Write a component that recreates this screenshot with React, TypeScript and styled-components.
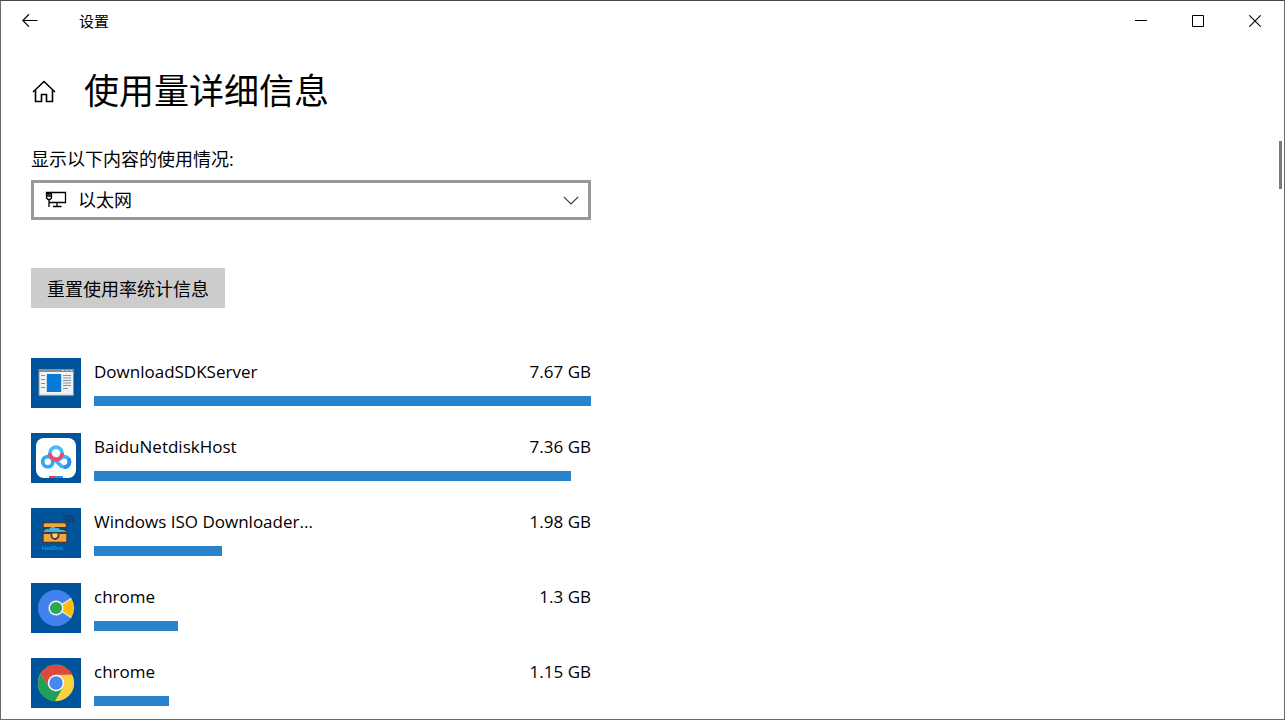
import React from "react";
import styled, { createGlobalStyle } from "styled-components";

const GlobalStyle = createGlobalStyle`
  *, *::before, *::after { box-sizing: border-box; }
  body {
    margin: 0;
    background: #fff;
    color: #000;
    font-family: "Open Sans", "Noto Sans CJK SC", sans-serif;
    font-size: 17px;
    line-height: 24px;
  }
  button, select { font: inherit; color: inherit; border-radius: 0; }
`;

const Window = styled.div`
  display: flex;
  flex-direction: column;
  min-height: 100vh;
  border: 1px solid #6b6869;
  border-top-color: #464445;
  background: #fff;
`;

const TitleBar = styled.header`
  display: flex;
  align-items: center;
  height: 40px;
  padding-right: 1px;
`;

const BackButton = styled.button`
  display: grid;
  place-items: center;
  width: 58px;
  height: 40px;
  padding: 0;
  border: 0;
  background: transparent;
`;

const AppName = styled.span`
  flex: 1;
  padding-left: 20px;
  font-size: 15px;
  line-height: 20px;
`;

const CaptionButton = styled.button`
  display: grid;
  place-items: center;
  width: 57px;
  height: 40px;
  padding: 0;
  border: 0;
  background: transparent;
`;

const PageHeader = styled.div`
  display: flex;
  align-items: center;
  gap: 27px;
  height: 100px;
  padding-left: 30px;
`;

const HomeLink = styled.a`
  display: grid;
  place-items: center;
  width: 26px;
  height: 26px;
  color: #000;
`;

const PageTitle = styled.h1`
  margin: 0;
  font-size: 35px;
  font-weight: 400;
  line-height: 48px;
`;

const Body = styled.div`
  display: flex;
  flex: 1;
`;

const Content = styled.main`
  flex: 1;
  padding: 6px 30px 10px;
`;

const ScrollRail = styled.div`
  width: 5px;
`;

const ScrollThumb = styled.div`
  width: 3px;
  height: 48px;
  background: #7a7a7a;
`;

const Column = styled.div`
  display: flex;
  flex-direction: column;
  align-items: flex-start;
  max-width: 560px;
`;

const FieldLabel = styled.label`
  margin-bottom: 9px;
  font-size: 18px;
`;

const SelectBox = styled.div`
  display: grid;
  align-items: center;
  width: 100%;
  margin-bottom: 48px;

  > * { grid-area: 1 / 1; }
  > svg { pointer-events: none; }
`;

const Select = styled.select`
  appearance: none;
  width: 100%;
  height: 40px;
  padding: 0 40px 0 44px;
  border: 3px solid #999;
  background: #fff;
  font-size: 18px;
`;

const NetworkGlyph = styled.svg`
  margin-left: 14px;
`;

const ChevronGlyph = styled.svg`
  justify-self: end;
  margin-right: 12px;
`;

const ResetButton = styled.button`
  height: 40px;
  margin-bottom: 50px;
  padding: 2px 16px 0;
  border: 0;
  background: #ccc;
  font-size: 18px;
`;

const UsageList = styled.ul`
  display: flex;
  flex-direction: column;
  gap: 25px;
  width: 100%;
  margin: 0;
  padding: 0;
  list-style: none;
`;

const UsageRow = styled.li`
  display: flex;
  gap: 13px;
`;

const Tile = styled.svg`
  flex: none;
  width: 50px;
  height: 50px;
  background: #00549c;
`;

const UsageInfo = styled.div`
  flex: 1;
  padding-top: 2px;
`;

const UsageText = styled.div`
  display: flex;
  justify-content: space-between;
  margin-bottom: 12px;
`;

const Bar = styled.div`
  height: 10px;
  background: #2882cc;
`;

const SdkIcon = () => (
  <Tile viewBox="0 0 50 50" aria-hidden="true">
    <rect x="7.5" y="11" width="35.5" height="27" fill="#8b8f91" />
    <rect x="8.5" y="14" width="33.5" height="22.8" fill="#f1f2f2" />
    <path d="M31 12.5h2M35 12.5h2M39 12.5h2" stroke="#c8cccf" />
    <rect x="15.8" y="16" width="14.4" height="18" fill="#0a7ad8" />
    <path d="M10 17.5h4M10 21.5h4M10 25.5h4M10 29.5h4M32 17.5h8M32 20h8M32 22.5h8M32 25h8M32 27.5h8M32 30.5h5" stroke="#8d9092" strokeWidth="1.1" />
  </Tile>
);

const BaiduIcon = () => (
  <Tile viewBox="0 0 50 50" aria-hidden="true">
    <rect x="5" y="5" width="40" height="40" rx="8" fill="#fff" />
    <g fill="none" strokeWidth="3.8" strokeLinecap="round">
      <circle cx="16.8" cy="28.8" r="5.1" stroke="#35a8f5" />
      <path d="M23 25.5L29 31.900a5.200 5.200 0 1 0 0-6.200" stroke="#38b6f8" />
      <path d="M34.500 34a5.200 5.200 0 0 0 3.600-7" stroke="#2c8ef0" />
      <circle cx="25" cy="20.300" r="6.100" stroke="#45bdfb" />
      <path d="M19 21.500a6.100 6.100 0 0 0 12 0" stroke="#f2486b" />
    </g>
    <path d="M18 43h7v2h-7z" fill="#ee3e5c" />
    <path d="M25 43h7v2h-7z" fill="#2c8cf0" />
  </Tile>
);

const HetDocText = styled.text`
  font-family: "Liberation Sans", sans-serif;
  font-size: 6px;
  font-weight: 700;
  fill: #0f9ade;
`;

const HetDocIcon = () => (
  <Tile viewBox="0 0 50 50" aria-hidden="true">
    <path d="M12 20v-4l1.500-1.500h20L35.500 16v4z" fill="#f3a63c" stroke="#383c40" strokeWidth="1.4" />
    <path d="M12.500 19h22.500v5.500h-22.500z" fill="#263e50" />
    <path d="M13 24c0-2.500 3-4 5-2.500 1-3.500 6-3.500 7-1 2-1 4 0 4 1.500 3-.5 5 .5 6 2z" fill="#42b6e2" />
    <path d="M12 25h24v9.500H12z" fill="#f3a63c" stroke="#383c40" strokeWidth="1.400" />
    <path d="M11.500 25h25" stroke="#383c40" strokeWidth="1.800" />
    <path d="M20.500 25.500v2a3.500 3.500 0 0 0 7 0v-2" fill="#ffd06b" stroke="#383c40" strokeWidth="1.800" />
    <path d="M32 8c4 0 7 3 7 6.500M32 11c3 0 4.500 1.500 4.500 3.500M37 7c3 1 5 4 5 7" fill="none" stroke="#183b63" strokeWidth="1.500" />
    <HetDocText x="11" y="41.500">HetDoc</HetDocText>
  </Tile>
);

const ChromeCanaryIcon = () => (
  <Tile viewBox="0 0 50 50" aria-hidden="true">
    <circle cx="25" cy="25" r="18" fill="#4381ef" />
    <path d="M25 25L40.300 15.500a18 18 0 0 1 0 19z" fill="#fdbd0b" />
    <path d="M25 25L40.300 15.500M25 25l15.300 9.500" stroke="#e6edf8" strokeWidth="1.200" />
    <circle cx="25" cy="25" r="7.600" fill="#edf3f7" />
    <circle cx="25" cy="25" r="6.100" fill="#2fa650" />
  </Tile>
);

const ChromeIcon = () => (
  <Tile viewBox="0 0 50 50" aria-hidden="true">
    <circle cx="25" cy="25" r="18.200" fill="#fdd03f" />
    <path d="M9.240 15.900A18.200 18.200 0 0 1 41.300 16.800H25L17.900 29.100z" fill="#dc4a3e" />
    <path d="M9.240 15.900L17.900 29.100A8.200 8.200 0 0 0 32.100 29.100L24 43.200A18.200 18.200 0 0 1 9.240 15.900z" fill="#20a05f" />
    <circle cx="25" cy="25" r="8.300" fill="#f3f5f8" />
    <circle cx="25" cy="25" r="6.700" fill="#4687f0" />
  </Tile>
);

const usage = [
  { id: "sdk", name: "DownloadSDKServer", gb: 7.67, Icon: SdkIcon },
  { id: "baidu", name: "BaiduNetdiskHost", gb: 7.36, Icon: BaiduIcon },
  { id: "iso", name: "Windows ISO Downloader...", gb: 1.98, Icon: HetDocIcon },
  { id: "canary", name: "chrome", gb: 1.3, Icon: ChromeCanaryIcon },
  { id: "chrome", name: "chrome", gb: 1.15, Icon: ChromeIcon },
];

const largest = Math.max(...usage.map((item) => item.gb));

export default function App() {
  return (
    <>
      <GlobalStyle />
      <Window>
        <TitleBar>
          <BackButton aria-label="返回">
            <svg width="16" height="14" viewBox="0 0 16 14" fill="none" stroke="#000" strokeWidth="1.200">
              <path d="M.8 6.500H15.500M7 .3L.8 6.500 7 12.700" />
            </svg>
          </BackButton>
          <AppName>设置</AppName>
          <CaptionButton aria-label="最小化">
            <svg width="12" height="12" viewBox="0 0 12 12" stroke="#000">
              <path d="M0 5.500h12" />
            </svg>
          </CaptionButton>
          <CaptionButton aria-label="最大化">
            <svg width="12" height="12" viewBox="0 0 12 12" fill="none" stroke="#000">
              <path d="M.5.5h11v11H.5z" />
            </svg>
          </CaptionButton>
          <CaptionButton aria-label="关闭">
            <svg width="12" height="12" viewBox="0 0 12 12" stroke="#000" strokeWidth="1.100">
              <path d="M.3.3l11.400 11.400M11.700.3L.3 11.700" />
            </svg>
          </CaptionButton>
        </TitleBar>

        <PageHeader>
          <HomeLink href="#home" aria-label="主页">
            <svg width="24" height="24" viewBox="0 0 24 24" fill="none" stroke="#000" strokeWidth="1.600">
              <path d="M1 13L12 2.500 23 13M3.500 11V22.500H9.500V15.500h5v7h6V11" />
            </svg>
          </HomeLink>
          <PageTitle>使用量详细信息</PageTitle>
        </PageHeader>

        <Body>
          <Content>
            <Column>
              <FieldLabel htmlFor="network">显示以下内容的使用情况:</FieldLabel>
              <SelectBox>
                <Select id="network" defaultValue="ethernet">
                  <option value="ethernet">以太网</option>
                </Select>
                <NetworkGlyph width="22" height="18" viewBox="0 0 22 18" fill="none" stroke="#000" strokeWidth="1.300">
                  <path d="M6.500 1.500H20.500V11.500H4M12 11.500V15M8 15.500h8.500M4 8.500V16" />
                  <path d="M1.500 1.500h5v3.500h-5zM1.500 3h5M1.500 5v2L3 8.500h2L6.500 7V5" />
                </NetworkGlyph>
                <ChevronGlyph width="16" height="9" viewBox="0 0 16 9" fill="none" stroke="#333" strokeWidth="1.100">
                  <path d="M.8.8L8 8l7.200-7.200" />
                </ChevronGlyph>
              </SelectBox>

              <ResetButton>重置使用率统计信息</ResetButton>

              <UsageList>
                {usage.map(({ id, name, gb, Icon }) => (
                  <UsageRow key={id}>
                    <Icon />
                    <UsageInfo>
                      <UsageText>
                        <span>{name}</span>
                        <span>{gb} GB</span>
                      </UsageText>
                      <Bar style={{ width: `${(gb / largest) * 100}%` }} />
                    </UsageInfo>
                  </UsageRow>
                ))}
              </UsageList>
            </Column>
          </Content>
          <ScrollRail>
            <ScrollThumb />
          </ScrollRail>
        </Body>
      </Window>
    </>
  );
}
